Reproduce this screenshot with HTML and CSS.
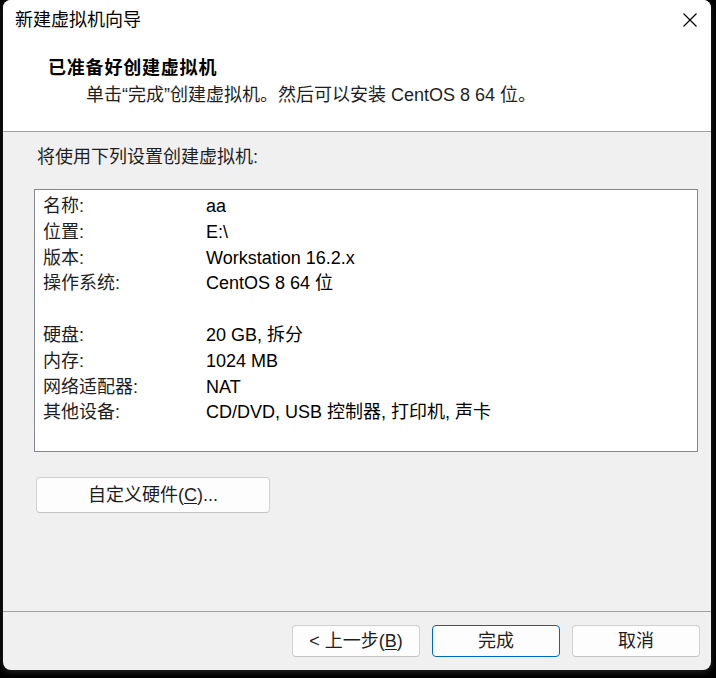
FILE: index.html
```html
<!DOCTYPE html>
<html lang="zh-CN">
<head>
<meta charset="utf-8">
<title>新建虚拟机向导</title>
<link rel="stylesheet" href="styles.css">
</head>
<body>
<div class="window">
  <div class="titlebar">
    <span class="title">新建虚拟机向导</span>
    <span class="close">
      <svg width="14" height="14" viewBox="0 0 14 14"><path d="M0.5 0.5 L13.5 13.5 M13.5 0.5 L0.5 13.5" stroke="#000" stroke-width="1.2" fill="none"/></svg>
    </span>
  </div>
  <div class="header">
    <div class="heading">已准备好创建虚拟机</div>
    <div class="subtitle">单击“完成”创建虚拟机。然后可以安装 CentOS 8 64 位。</div>
  </div>
  <div class="main">
    <div class="section-label">将使用下列设置创建虚拟机:</div>
    <div class="summary">
      <div class="row"><span class="key">名称:</span><span class="val">aa</span></div>
      <div class="row"><span class="key">位置:</span><span class="val">E:\</span></div>
      <div class="row"><span class="key">版本:</span><span class="val">Workstation 16.2.x</span></div>
      <div class="row"><span class="key">操作系统:</span><span class="val">CentOS 8 64 位</span></div>
      <div class="row blank"></div>
      <div class="row"><span class="key">硬盘:</span><span class="val">20 GB, 拆分</span></div>
      <div class="row"><span class="key">内存:</span><span class="val">1024 MB</span></div>
      <div class="row"><span class="key">网络适配器:</span><span class="val">NAT</span></div>
      <div class="row"><span class="key">其他设备:</span><span class="val">CD/DVD, USB 控制器, 打印机, 声卡</span></div>
    </div>
    <button class="btn custom">自定义硬件(<u>C</u>)...</button>
  </div>
  <div class="footer">
    <button class="btn">&lt; 上一步(<u>B</u>)</button>
    <button class="btn primary">完成</button>
    <button class="btn">取消</button>
  </div>
</div>
</body>
</html>
```

FILE: styles.css
```css
html, body {
  margin: 0;
  padding: 0;
  background: #000;
  width: 716px;
  height: 678px;
  overflow: hidden;
}

body {
  font-family: "Liberation Sans", "Noto Sans CJK SC", sans-serif;
  font-size: 18px;
  color: #1e1e1e;
}

.window {
  margin-left: 3px;
  width: 708px;
  height: 670px;
  background: #f0f0f0;
  border-radius: 8px;
  overflow: hidden;
  display: flex;
  flex-direction: column;
  box-shadow: 0 2px 6px rgba(60, 60, 60, 0.6);
}

.titlebar {
  height: 40px;
  background: #fff;
  display: flex;
  align-items: center;
  justify-content: space-between;
  padding: 0 14px 0 12px;
}

.title {
  color: #000;
  line-height: 40px;
}

.close {
  display: flex;
  width: 14px;
  height: 14px;
}

.header {
  background: #fff;
  padding: 15px 0 23px 45px;
  border-bottom: 1px solid #a0a0a0;
}

.heading {
  font-weight: bold;
  line-height: 26px;
  color: #000;
  letter-spacing: 0.8px;
}

.subtitle {
  line-height: 26px;
  margin-top: 1px;
  padding-left: 38px;
}

.main {
  flex: 1;
  padding: 12px 0 0 31px;
  display: flex;
  flex-direction: column;
  align-items: flex-start;
}

.section-label {
  line-height: 26px;
  padding-left: 3px;
}

.summary {
  margin-top: 19px;
  width: 647px;
  height: 257px;
  background: #fff;
  border: 1px solid #828790;
  padding: 4px 7px 0 8px;
  box-sizing: content-box;
}

.row {
  display: flex;
  height: 25.8px;
  line-height: 25.8px;
}

.key {
  width: 163px;
  flex: none;
}

.val {
  color: #000;
}

.btn {
  font-family: inherit;
  font-size: 18px;
  color: #1e1e1e;
  background: #fdfdfd;
  border: 1px solid #d0d0d0;
  border-bottom-color: #c4c4c4;
  border-radius: 4px;
  padding: 0;
  height: 32px;
  width: 128px;
  line-height: 28px;
}

.btn u {
  text-underline-offset: 2px;
}

.custom {
  margin-top: 25px;
  margin-left: 2px;
  width: 234px;
  height: 36px;
}

.primary {
  border: 1px solid #0067c0;
}

.footer {
  border-top: 1px solid #a0a0a0;
  padding: 13px 11px 13px 0;
  display: flex;
  justify-content: flex-end;
  gap: 12px;
}
```
